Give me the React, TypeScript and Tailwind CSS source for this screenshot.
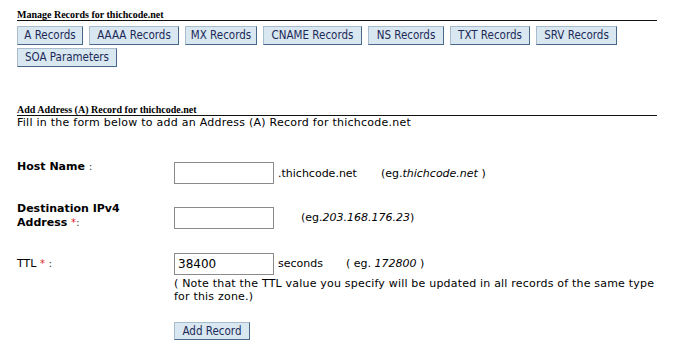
import React from "react";

const tabs = [
  { label: "A Records", w: "w-[66px]" },
  { label: "AAAA Records", w: "w-[90px]" },
  { label: "MX Records", w: "w-[72px]" },
  { label: "CNAME Records", w: "w-[99px]" },
  { label: "NS Records", w: "w-[76px]" },
  { label: "TXT Records", w: "w-[80px]" },
  { label: "SRV Records", w: "w-[81px]" },
  { label: "SOA Parameters", w: "w-[100px]" },
];

function Tab({ label, w }: { label: string; w: string }) {
  return (
    <button
      type="button"
      className={`${w} h-[19px] bg-[#d9e7f1] border border-[#a9bccd] border-r-[#49698a] border-b-[#49698a] text-[11.5px] leading-[17px] text-[#1b2a58] font-['DejaVu_Sans_Condensed','Liberation_Sans',sans-serif] text-center`}
    >
      {label}
    </button>
  );
}

function Heading({ children }: { children: React.ReactNode }) {
  return (
    <div className="border-b border-[#111] font-['Liberation_Serif',serif] font-bold text-[10px] leading-[11px] text-black">
      {children}
    </div>
  );
}

const inputCls =
  "w-[100px] h-[22px] border border-[#8a8a8a] bg-white px-[3px] text-[12px] text-black outline-none";

export default function App() {
  return (
    <div className="w-[675px] h-[348px] bg-white pl-[17px] pt-[9px] font-['DejaVu_Sans',Verdana,sans-serif] text-[11px] text-black overflow-hidden">
      <div className="w-[640px]">
        <Heading>Manage Records for thichcode.net</Heading>
        <div className="flex flex-wrap gap-x-[6px] gap-y-[3px] mt-[5px] w-[610px]">
          {tabs.map((t) => (
            <Tab key={t.label} label={t.label} w={t.w} />
          ))}
        </div>

        <div className="mt-[37px]">
          <Heading>Add Address (A) Record for thichcode.net</Heading>
          <p className="leading-[14px] tracking-[0.25px]">
            Fill in the form below to add an Address (A) Record for thichcode.net
          </p>
        </div>

        <div className="mt-[30px] flex flex-col">
          <div className="flex">
            <div className="w-[157px] font-bold leading-[14px]">
              Host Name <span className="font-normal text-[#444]">:</span>
            </div>
            <div className="flex items-center mt-[2px]">
              <input className={inputCls} />
              <span className="ml-[4px] mt-[3px]">.thichcode.net</span>
              <span className="ml-[24px] mt-[3px]">
                (eg.<i>thichcode.net</i> )
              </span>
            </div>
          </div>

          <div className="flex mt-[18px]">
            <div className="w-[157px] font-bold leading-[14px]">
              Destination IPv4
              <br />
              Address <span className="text-[#e0262c] font-normal text-[10px]">*</span>
              <span className="font-normal text-[#444]">:</span>
            </div>
            <div className="flex items-center mt-[3px]">
              <input className={inputCls} />
              <span className="ml-[27px] mt-[1px]">
                (eg.<i>203.168.176.23</i>)
              </span>
            </div>
          </div>

          <div className="flex mt-[23px]">
            <div className="w-[157px] leading-[14px] mt-[4px]">
              TTL <span className="text-[#e0262c] text-[10px]">*</span>{" "}
              <span className="text-[#444]">:</span>
            </div>
            <div className="flex flex-col w-[483px]">
              <div className="flex items-center">
                <input className={inputCls} defaultValue="38400" />
                <span className="ml-[4px] mt-[1px]">seconds</span>
                <span className="ml-[23px] mt-[1px]">
                  ( eg. <i>172800</i> )
                </span>
              </div>
              <p className="leading-[13px] mt-[2px] tracking-[0.2px]">
                ( Note that the TTL value you specify will be updated in all records of the same
                type for this zone.)
              </p>
              <button
                type="button"
                className="mt-[19px] w-[76px] h-[18px] bg-[#d9e7f1] border border-[#a9bccd] border-r-[#49698a] border-b-[#49698a] text-[11.5px] leading-[16px] text-[#1b2a58] font-['DejaVu_Sans_Condensed','Liberation_Sans',sans-serif]"
              >
                Add Record
              </button>
            </div>
          </div>
        </div>
      </div>
    </div>
  );
}
